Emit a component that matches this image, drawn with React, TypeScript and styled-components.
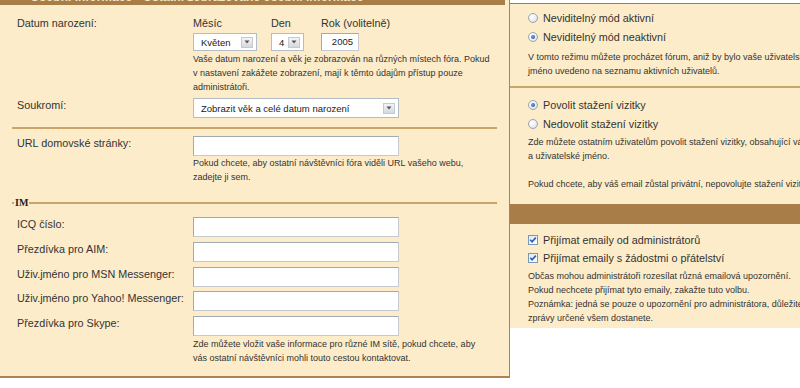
import React from "react";
import styled, { createGlobalStyle } from "styled-components";

const GlobalStyle = createGlobalStyle`
  html, body {
    margin: 0;
    padding: 0;
    background: #fff;
    overflow: hidden;
  }
  body {
    font-family: "Liberation Sans", Arial, sans-serif;
    color: #333;
  }
`;

const Page = styled.div`
  display: flex;
  align-items: flex-start;
  width: 800px;
  height: 388px;
  overflow: hidden;
`;

const LeftPanel = styled.section`
  flex: none;
  width: 509px;
  margin-top: -17px;
  background: #fdecc9;
  border-right: 1px solid #ad8450;
  border-bottom: 2px solid #ad8450;
`;

const PanelTitle = styled.h3`
  margin: 0 4px 0 0;
  height: 22px;
  padding: 7px 0 0 30px;
  box-sizing: border-box;
  line-height: 15px;
  background: #a87d48;
  color: #f6e4c0;
  font: bold 12px "Liberation Sans", Arial, sans-serif;
  white-space: nowrap;
  overflow: hidden;
`;

const LeftBody = styled.div`
  padding: 0 12px 11px;
`;

const Block = styled.div<{ $top: number }>`
  padding-top: ${(p) => p.$top}px;
`;

const FieldRow = styled.div<{ $top?: number }>`
  display: grid;
  grid-template-columns: 176px 1fr;
  align-items: start;
  padding-left: 5px;
  margin-top: ${(p) => p.$top ?? 0}px;
`;

const Label = styled.div`
  padding-top: 1px;
  font-size: 10.8px;
  line-height: 13px;
  white-space: nowrap;
`;

const DateGrid = styled.div`
  display: grid;
  grid-template-columns: 78px 50px auto;
  row-gap: 3px;
`;

const SelectBox = styled.div<{ $width: number; $height: number }>`
  display: flex;
  align-items: center;
  justify-content: space-between;
  box-sizing: border-box;
  width: ${(p) => p.$width}px;
  height: ${(p) => p.$height}px;
  padding: 0 3px 0 7px;
  background: #fff;
  border: 1px solid #b3bdc7;
  font-size: 9.5px;
  color: #222;
  white-space: nowrap;
`;

const DropButton = styled.span`
  display: flex;
  align-items: center;
  justify-content: center;
  box-sizing: border-box;
  width: 12px;
  height: 11px;
  border: 1px solid #c4cad1;
  background: linear-gradient(#f4f4f4, #d6d8db);
`;

const TextInput = styled.div<{ $width: number; $align?: string }>`
  box-sizing: border-box;
  width: ${(p) => p.$width}px;
  height: 20px;
  padding: 0 5px;
  line-height: 18px;
  background: #fff;
  border: 1px solid;
  border-color: #a2abb4 #c4cad0 #c4cad0 #a2abb4;
  font-size: 9.5px;
  color: #222;
  text-align: ${(p) => p.$align ?? "left"};
`;

const Help = styled.p<{ $top?: number }>`
  margin: ${(p) => p.$top ?? 0}px 0 0;
  font-size: 9px;
  line-height: 14px;
  white-space: nowrap;
`;

const Divider = styled.hr<{ $top: number }>`
  margin: ${(p) => p.$top}px 0 0;
  height: 2px;
  border: 0;
  background: #c9a46b;
`;

const ImLegend = styled.div`
  display: flex;
  align-items: center;
  gap: 1px;
  margin-top: 12px;
  height: 13px;
  font: bold 10px "Liberation Serif", "Times New Roman", serif;
  color: #222;
  &::before {
    content: "";
    width: 2px;
    height: 2px;
    background: #c9a46b;
  }
  &::after {
    content: "";
    flex: 1;
    height: 2px;
    background: #c9a46b;
  }
`;

const ImList = styled.div`
  display: flex;
  flex-direction: column;
  gap: 4.75px;
  margin-top: 8px;
`;

const RightPanel = styled.section`
  flex: none;
  width: 340px;
  margin-top: 3px;
  background: #fdecc9;
  border-top: 1px solid #a47a47;
  padding-bottom: 3px;
`;

const RightSection = styled.div<{ $top: number }>`
  padding: ${(p) => p.$top}px 18px 0;
`;

const OptionRow = styled.div<{ $height: number }>`
  display: flex;
  align-items: center;
  gap: 5px;
  height: ${(p) => p.$height}px;
  font-size: 10.8px;
  white-space: nowrap;
`;

const Radio = styled.span<{ $checked?: boolean }>`
  position: relative;
  flex: none;
  box-sizing: border-box;
  width: 10px;
  height: 10px;
  border-radius: 50%;
  border: 1px solid #9aa6b2;
  background: radial-gradient(circle at 35% 35%, #ffffff 0%, #eceef0 55%, #c9ced4 100%);
  &::after {
    content: "";
    display: ${(p) => (p.$checked ? "block" : "none")};
    position: absolute;
    left: 2px;
    top: 2px;
    width: 4px;
    height: 4px;
    border-radius: 50%;
    background: radial-gradient(circle at 40% 40%, #6f9be0, #1d4b9b);
  }
`;

const BrownBar = styled.div`
  margin-top: 13px;
  height: 20px;
  background: #a87d48;
`;

const RightDivider = styled.hr`
  margin: 8px 0 0;
  height: 2px;
  border: 0;
  background: #c9a46b;
`;

const Checkbox = () => (
  <svg width="10" height="10" viewBox="0 0 10 10" style={{ flex: "none" }}>
    <defs>
      <linearGradient id="cb" x1="0" y1="0" x2="1" y2="1">
        <stop offset="0" stopColor="#dfe6f0" />
        <stop offset="1" stopColor="#ffffff" />
      </linearGradient>
    </defs>
    <rect x="0.5" y="0.5" width="9" height="9" fill="url(#cb)" stroke="#7c98b8" />
    <path d="M2.3 4.8 L4.1 6.8 L7.8 2.6" fill="none" stroke="#2a5dbb" strokeWidth="1.6" />
  </svg>
);

const Arrow = () => (
  <svg width="6" height="4" viewBox="0 0 6 4">
    <path d="M0.5 0.5 H5.5 L3 3.5 Z" fill="#4d5560" />
  </svg>
);

const Select = ({ width, height, value }: { width: number; height: number; value: string }) => (
  <SelectBox $width={width} $height={height}>
    <span>{value}</span>
    <DropButton>
      <Arrow />
    </DropButton>
  </SelectBox>
);

const imFields = [
  "ICQ číslo:",
  "Přezdívka pro AIM:",
  "Uživ.jméno pro MSN Messenger:",
  "Uživ.jméno pro Yahoo! Messenger:",
  "Přezdívka pro Skype:",
];

export default function App() {
  return (
    <>
      <GlobalStyle />
      <Page>
        <LeftPanel>
          <PanelTitle>Osobní informace - Ostatní zobrazované osobní informace</PanelTitle>
          <LeftBody>
            <Block $top={11}>
              <FieldRow>
                <Label>Datum narození:</Label>
                <div>
                  <DateGrid>
                    <Label>Měsíc</Label>
                    <Label>Den</Label>
                    <Label>Rok (volitelně)</Label>
                    <Select width={64} height={18} value="Květen" />
                    <Select width={33} height={18} value="4" />
                    <TextInput $width={38} $align="right" style={{ height: 18, lineHeight: "16px" }}>
                      2005
                    </TextInput>
                  </DateGrid>
                  <Help $top={1}>
                    Vaše datum narození a věk je zobrazován na různých místech fóra. Pokud
                    <br />v nastavení zakážete zobrazení, mají k těmto údajům přístup pouze
                    <br />
                    administrátoři.
                  </Help>
                </div>
              </FieldRow>
              <FieldRow $top={4}>
                <Label>Soukromí:</Label>
                <Select width={206} height={20} value="Zobrazit věk a celé datum narození" />
              </FieldRow>
            </Block>
            <Divider $top={9} />
            <FieldRow $top={7}>
              <Label>URL domovské stránky:</Label>
              <div>
                <TextInput $width={206} />
                <Help>
                  Pokud chcete, aby ostatní návštěvníci fóra viděli URL vašeho webu,
                  <br />
                  zadejte ji sem.
                </Help>
              </div>
            </FieldRow>
            <ImLegend>IM</ImLegend>
            <ImList>
              {imFields.map((f) => (
                <FieldRow key={f}>
                  <Label>{f}</Label>
                  <TextInput $width={206} />
                </FieldRow>
              ))}
            </ImList>
            <FieldRow $top={1}>
              <span />
              <Help>
                Zde můžete vložit vaše informace pro různé IM sítě, pokud chcete, aby
                <br />
                vás ostatní návštěvníci mohli touto cestou kontaktovat.
              </Help>
            </FieldRow>
          </LeftBody>
        </LeftPanel>

        <RightPanel>
          <RightSection $top={4.5}>
            <OptionRow $height={19}>
              <Radio />
              Neviditelný mód aktivní
            </OptionRow>
            <OptionRow $height={19}>
              <Radio $checked />
              Neviditelný mód neaktivní
            </OptionRow>
            <Help $top={3.5}>
              V tomto režimu můžete procházet fórum, aniž by bylo vaše uživatelské
              <br />
              jméno uvedeno na seznamu aktivních uživatelů.
            </Help>
          </RightSection>
          <RightDivider />
          <RightSection $top={7.5}>
            <OptionRow $height={19}>
              <Radio $checked />
              Povolit stažení vizitky
            </OptionRow>
            <OptionRow $height={19}>
              <Radio />
              Nedovolit stažení vizitky
            </OptionRow>
            <Help $top={1.5}>
              Zde můžete ostatním uživatelům povolit stažení vizitky, obsahující váš email
              <br />
              a uživatelské jméno.
              <br />
              <br />
              Pokud chcete, aby váš email zůstal privátní, nepovolujte stažení vizitky.
            </Help>
          </RightSection>
          <BrownBar />
          <RightSection $top={7}>
            <OptionRow $height={18}>
              <Checkbox />
              Přijímat emaily od administrátorů
            </OptionRow>
            <OptionRow $height={18}>
              <Checkbox />
              Přijímat emaily s žádostmi o přátelství
            </OptionRow>
            <Help $top={2}>
              Občas mohou administrátoři rozesílat různá emailová upozornění.
              <br />
              Pokud nechcete přijímat tyto emaily, zakažte tuto volbu.
              <br />
              Poznámka: jedná se pouze o upozornění pro administrátora, důležité
              <br />
              zprávy určené všem dostanete.
            </Help>
          </RightSection>
        </RightPanel>
      </Page>
    </>
  );
}
